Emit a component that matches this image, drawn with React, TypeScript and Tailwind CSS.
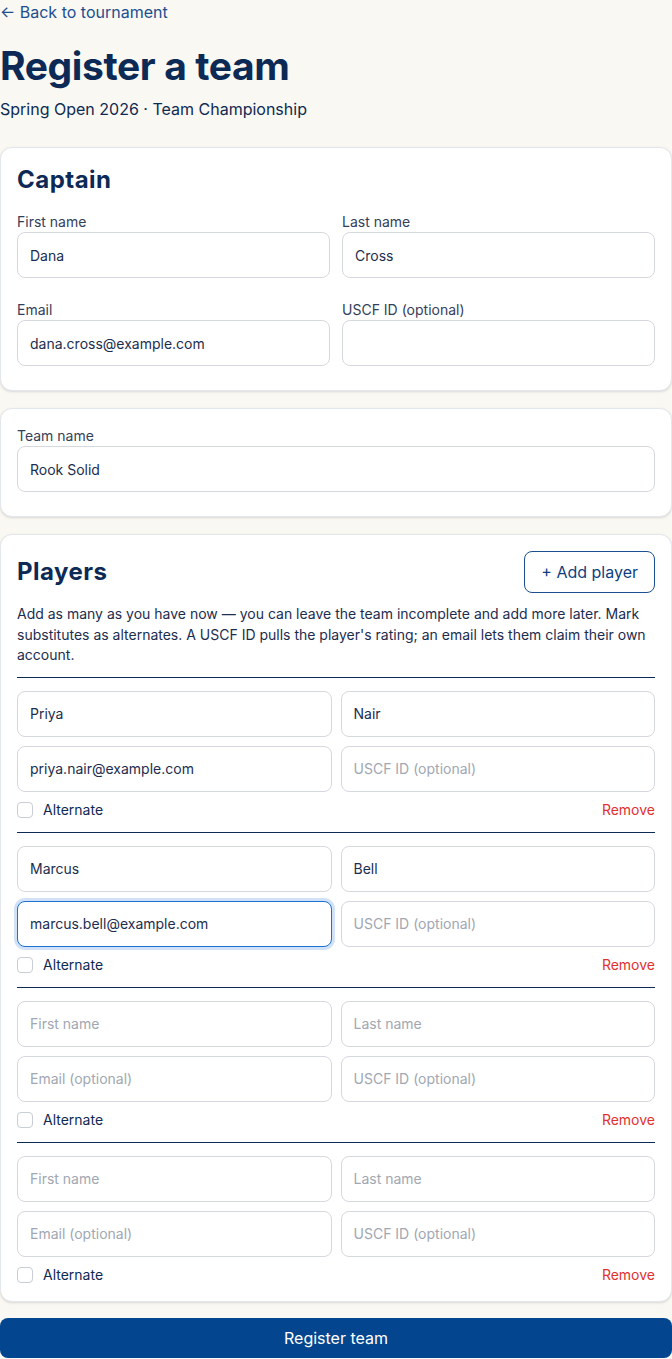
import React from "react";

type Player = {
  first: string;
  last: string;
  email: string;
  focused?: boolean;
};

const players: Player[] = [
  { first: "Priya", last: "Nair", email: "priya.nair@example.com" },
  { first: "Marcus", last: "Bell", email: "marcus.bell@example.com", focused: true },
  { first: "", last: "", email: "" },
  { first: "", last: "", email: "" },
];

function TextInput({
  value,
  placeholder,
  focused,
}: {
  value?: string;
  placeholder?: string;
  focused?: boolean;
}) {
  return (
    <input
      type="text"
      defaultValue={value}
      placeholder={placeholder}
      className={
        "block h-[46px] w-full rounded-lg border bg-white px-3 text-sm leading-5 text-[#1c2d4e] outline-none placeholder:text-[#a1a7b3] " +
        (focused
          ? "border-[#1b6fd6] ring-[3px] ring-[#1b6fd6]/20"
          : "border-[#d5d8df]")
      }
    />
  );
}

function Field({ label, value }: { label: string; value?: string }) {
  return (
    <div>
      <label className="block text-sm leading-5 text-[#34405a]">{label}</label>
      <TextInput value={value} />
    </div>
  );
}

function PlayerRow({ p }: { p: Player }) {
  return (
    <div className="border-t border-[#0d2a55] pt-[13px]">
      <div className="grid grid-cols-2 gap-[9px]">
        <TextInput value={p.first} placeholder="First name" />
        <TextInput value={p.last} placeholder="Last name" />
        <TextInput value={p.email} placeholder="Email (optional)" focused={p.focused} />
        <TextInput placeholder="USCF ID (optional)" />
      </div>
      <div className="mt-2 flex h-5 items-center justify-between text-sm">
        <label className="flex items-center gap-2.5 text-[#0f2a52]">
          <span className="h-4 w-4 rounded-[4px] border border-[#c9cdd5] bg-white" />
          Alternate
        </label>
        <button className="text-[#e0312f]">Remove</button>
      </div>
    </div>
  );
}

export default function App() {
  return (
    <div className="min-h-screen bg-[#f9f8f3] font-['Inter','Liberation_Sans',sans-serif] text-[#0f2a52]">
      <a href="#" className="block text-base leading-6 text-[#1c4f8f]">
        ← Back to tournament
      </a>

      <h1 className="mt-[18px] text-[39px] font-bold leading-[48px] tracking-[-0.01em] text-[#0c2a55]">
        Register a team
      </h1>
      <p className="mt-[7px] text-base leading-6 text-[#0f2a52]">
        Spring Open 2026 · Team Championship
      </p>

      <div className="mt-[26px] flex flex-col gap-[17px]">
        {/* Captain */}
        <section className="rounded-xl border border-[#e3e6ec] bg-white px-4 pb-6 pt-4 shadow-sm">
          <h2 className="mb-4 text-2xl font-bold leading-8 tracking-[0.02em] text-[#0c2a55]">
            Captain
          </h2>
          <div className="grid grid-cols-2 gap-x-3 gap-y-[22px]">
            <Field label="First name" value="Dana" />
            <Field label="Last name" value="Cross" />
            <Field label="Email" value="dana.cross@example.com" />
            <Field label="USCF ID (optional)" />
          </div>
        </section>

        {/* Team name */}
        <section className="rounded-xl border border-[#e3e6ec] bg-white px-4 pb-6 pt-[17px] shadow-sm">
          <Field label="Team name" value="Rook Solid" />
        </section>

        {/* Players */}
        <section className="rounded-xl border border-[#e3e6ec] bg-white px-4 pb-4 pt-4 shadow-sm">
          <div className="mb-[11px] flex items-center justify-between">
            <h2 className="text-2xl font-bold leading-8 tracking-[0.02em] text-[#0c2a55]">
              Players
            </h2>
            <button className="rounded-lg border border-[#1c4f8f] px-4 py-2 text-base leading-6 text-[#0f3f80]">
              + Add player
            </button>
          </div>
          <p className="mb-[11px] text-sm leading-[20.5px] text-[#1c2d4e]">
            Add as many as you have now — you can leave the team incomplete and add more later.
            Mark substitutes as alternates. A USCF ID pulls the player's rating; an email lets
            them claim their own account.
          </p>
          <div className="flex flex-col gap-3">
            {players.map((p, i) => (
              <PlayerRow key={i} p={p} />
            ))}
          </div>
        </section>
      </div>

      <button className="mt-4 block w-full rounded-lg bg-[#03468f] py-2 text-base leading-6 text-white">
        Register team
      </button>
    </div>
  );
}
